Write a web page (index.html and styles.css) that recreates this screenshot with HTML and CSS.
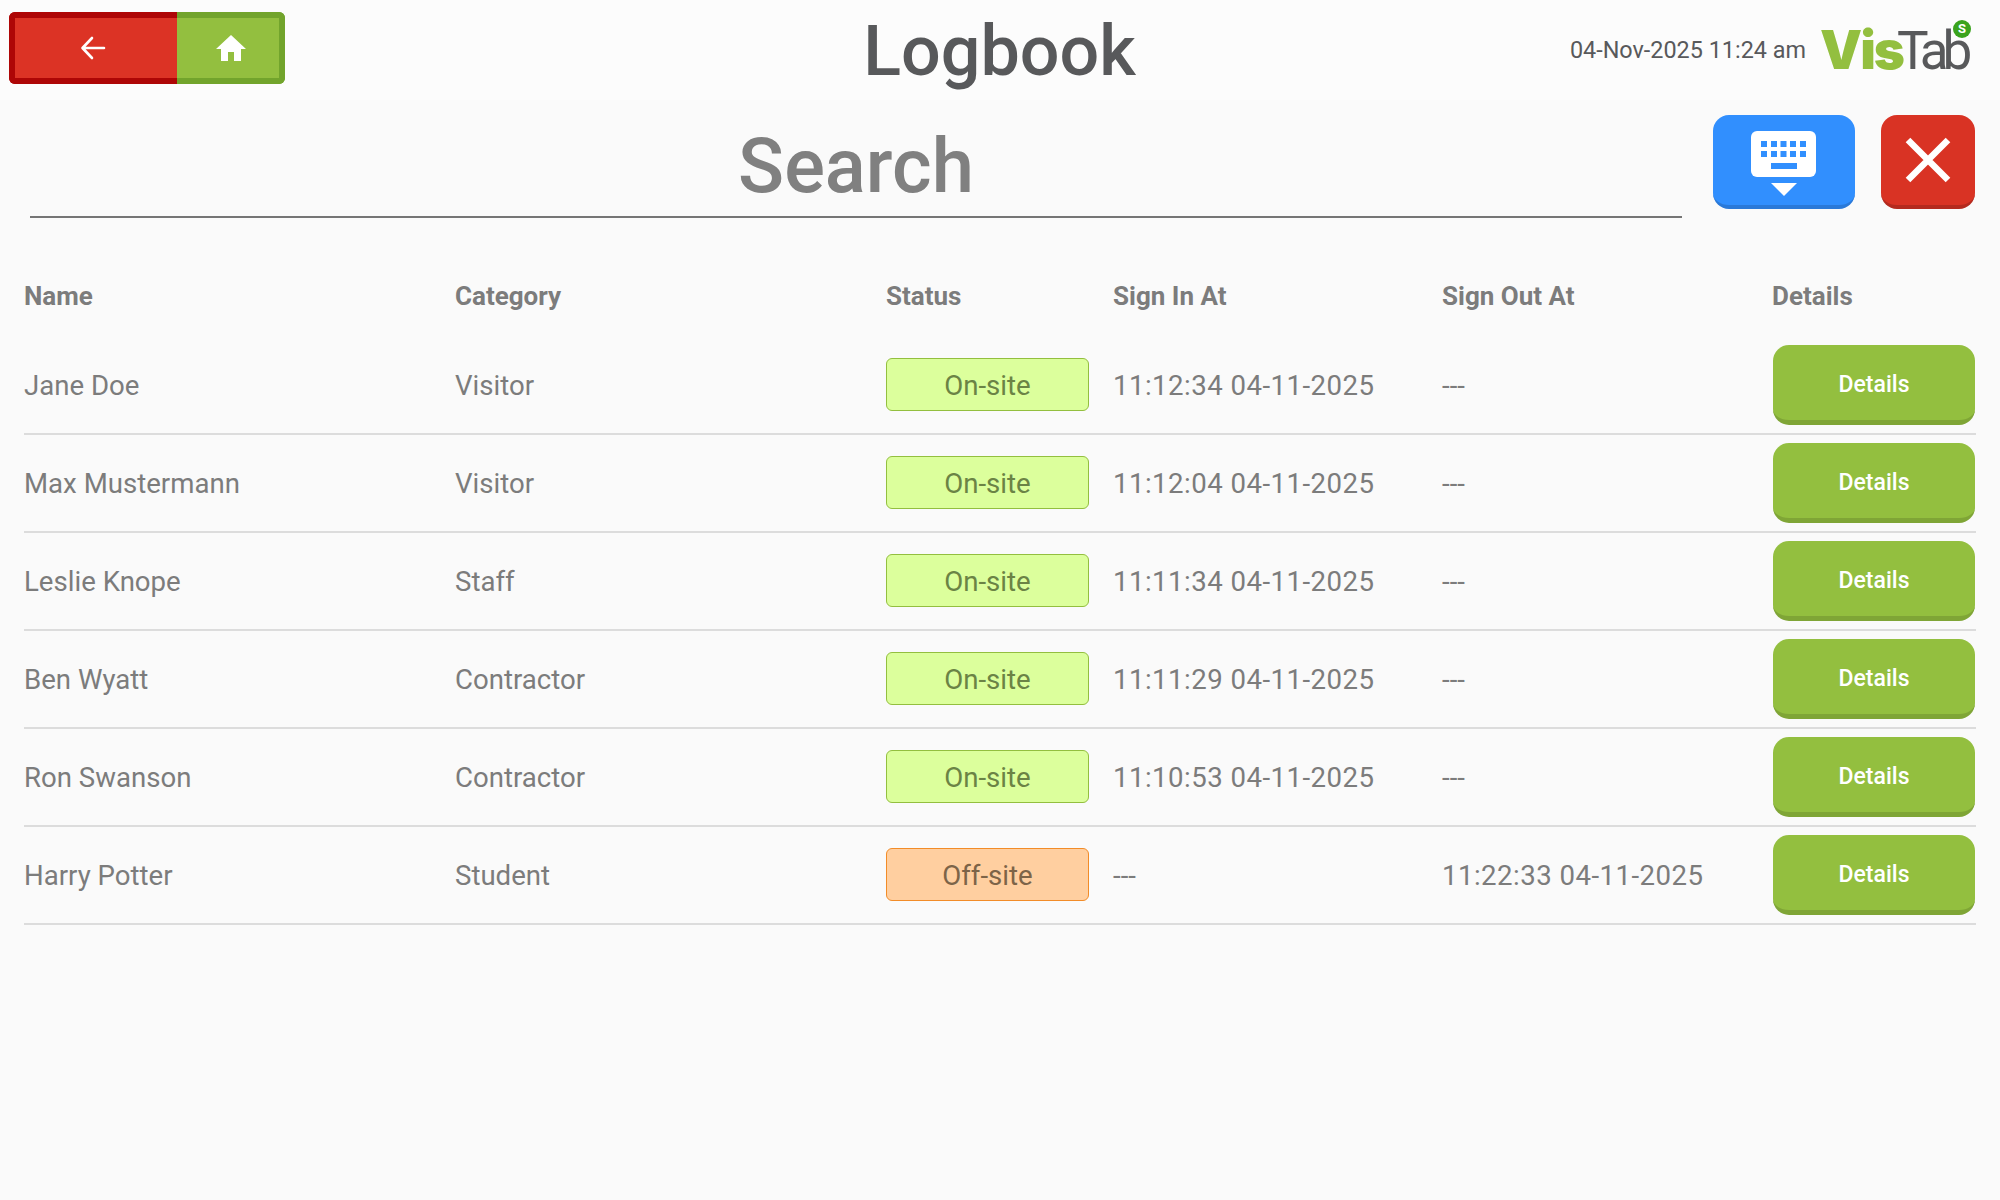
FILE: index.html
```html
<html>
<head>
    <title>Logbook</title>
    <link rel="stylesheet" href="styles.css">
</head>
<body>
    <header class="topbar">
        <div class="navbuttons">
            <div class="navbutton back">
                <svg width="26" height="24" viewBox="0 0 26 24"><path d="M24 12H3M12 2L2.500 12L12 22" fill="none" stroke="#fff" stroke-width="2.600" stroke-linecap="round" stroke-linejoin="round"/></svg>
            </div>
            <div class="navbutton home">
                <svg width="30" height="26" viewBox="0 0 30 26"><path d="M15 0L30 14H25V26H18V17H12V26H5V14H0Z" fill="#fff"/></svg>
            </div>
        </div>
        <h1 class="title">Logbook</h1>
        <div class="topright">
            <span class="clock">04-Nov-2025 11:24 am</span>
            <div class="logo"><span class="logo-vis">Vis</span><span class="logo-tab">Tab</span><span class="logo-badge">S</span></div>
        </div>
    </header>

    <section class="searchbar">
        <div class="searchfield">Search</div>
        <div class="iconbutton keyboard">
            <svg width="66" height="66" viewBox="0 0 66 66">
                <rect x="0" y="0" width="65" height="46" rx="6" fill="#fff"/>
                <g fill="#318ffe">
                    <rect x="10" y="10" width="6" height="6"/><rect x="20" y="10" width="6" height="6"/><rect x="29.500" y="10" width="6" height="6"/><rect x="39" y="10" width="6" height="6"/><rect x="49" y="10" width="6" height="6"/>
                    <rect x="10" y="20" width="6" height="6"/><rect x="20" y="20" width="6" height="6"/><rect x="29.500" y="20" width="6" height="6"/><rect x="39" y="20" width="6" height="6"/><rect x="49" y="20" width="6" height="6"/>
                    <rect x="20" y="32" width="26" height="6"/>
                </g>
                <path d="M20 52H46L33 65Z" fill="#fff"/>
            </svg>
        </div>
        <div class="iconbutton close">
            <svg width="46" height="46" viewBox="0 0 46 46"><path d="M3 3L43 43M43 3L3 43" stroke="#fff" stroke-width="6.500" fill="none"/></svg>
        </div>
    </section>

    <section class="logtable">
        <div class="logrow headrow">
            <div>Name</div><div>Category</div><div>Status</div><div>Sign In At</div><div>Sign Out At</div><div>Details</div>
        </div>
        <div class="logrow">
            <div>Jane Doe</div><div>Visitor</div><div><span class="pill onsite">On-site</span></div><div class="stamp">11:12:34 04-11-2025</div><div>---</div><div><span class="detailsbutton">Details</span></div>
        </div>
        <div class="logrow">
            <div>Max Mustermann</div><div>Visitor</div><div><span class="pill onsite">On-site</span></div><div class="stamp">11:12:04 04-11-2025</div><div>---</div><div><span class="detailsbutton">Details</span></div>
        </div>
        <div class="logrow">
            <div>Leslie Knope</div><div>Staff</div><div><span class="pill onsite">On-site</span></div><div class="stamp">11:11:34 04-11-2025</div><div>---</div><div><span class="detailsbutton">Details</span></div>
        </div>
        <div class="logrow">
            <div>Ben Wyatt</div><div>Contractor</div><div><span class="pill onsite">On-site</span></div><div class="stamp">11:11:29 04-11-2025</div><div>---</div><div><span class="detailsbutton">Details</span></div>
        </div>
        <div class="logrow">
            <div>Ron Swanson</div><div>Contractor</div><div><span class="pill onsite">On-site</span></div><div class="stamp">11:10:53 04-11-2025</div><div>---</div><div><span class="detailsbutton">Details</span></div>
        </div>
        <div class="logrow">
            <div>Harry Potter</div><div>Student</div><div><span class="pill offsite">Off-site</span></div><div>---</div><div class="stamp">11:22:33 04-11-2025</div><div><span class="detailsbutton">Details</span></div>
        </div>
    </section>
</body>
</html>
```

FILE: styles.css
```css
* {
    box-sizing: border-box;
}
html, body {
    height: 100%;
}
body {
    margin: 0;
    background-color: #fafafa;
    font-family: Roboto, "Liberation Sans", sans-serif;
    color: #7c7c7c;
    -webkit-font-smoothing: antialiased;
}
.topbar {
    display: grid;
    grid-template-columns: 1fr auto 1fr;
    align-items: center;
    height: 100px;
    padding: 0 29px 0 9px;
    background-color: #fcfcfc;
}
.navbuttons {
    display: flex;
    width: 276px;
    height: 72px;
    margin-top: -4px;
}
.navbutton {
    display: flex;
    align-items: center;
    justify-content: center;
    border-style: solid;
    border-width: 6px;
}
.back {
    width: 168px;
    padding-right: 6px;
    background-color: #dc3325;
    border-color: #ae0606;
    border-right-width: 0;
    border-radius: 6px 0 0 6px;
}
.home {
    width: 108px;
    padding-left: 6px;
    background-color: #93bf3f;
    border-color: #72a42c;
    border-left-width: 0;
    border-radius: 0 6px 6px 0;
}
.title {
    margin: 2px 0 0 19px;
    font-size: 70px;
    font-weight: 500;
    color: #58595b;
}
.topright {
    display: flex;
    align-items: center;
    justify-content: flex-end;
    gap: 14px;
}
.clock {
    font-size: 23.400px;
    color: #58595b;
}
.logo {
    position: relative;
    display: flex;
    align-items: baseline;
    width: 151px;
    line-height: 60px;
}
.logo-vis {
    font-family: Inter, sans-serif;
    font-size: 53px;
    font-weight: 900;
    color: #93bf3f;
    letter-spacing: -2px;
}
.logo-tab {
    margin-left: -6px;
    font-size: 53px;
    font-weight: 400;
    color: #58595b;
    letter-spacing: -6px;
}
.logo-badge {
    position: absolute;
    top: 0;
    right: 0;
    width: 18px;
    height: 18px;
    border-radius: 50%;
    background-color: #3aa31d;
    color: #fff;
    font-size: 13px;
    font-weight: 700;
    line-height: 18px;
    text-align: center;
}
.searchbar {
    display: flex;
    align-items: flex-start;
    height: 146px;
    padding: 15px 25px 0 30px;
}
.searchfield {
    width: 1652px;
    height: 103px;
    border-bottom: 2px solid #757575;
    font-size: 76px;
    font-weight: 500;
    line-height: 103px;
    text-align: center;
    color: #808080;
}
.iconbutton {
    display: flex;
    align-items: center;
    justify-content: center;
    height: 94px;
    border-radius: 16px;
}
.keyboard {
    width: 142px;
    margin-left: 31px;
    padding-top: 8px;
    background-color: #318ffe;
    border-bottom: 4px solid #2a79d8;
}
.close {
    width: 94px;
    margin-left: 26px;
    background-color: #d93324;
    border-bottom: 4px solid #b42a1e;
}
.logtable {
    padding: 0 24px 0 24px;
}
.logrow {
    display: grid;
    grid-template-columns: 431px 431px 227px 329px 330px 204px;
    align-items: center;
    height: 98px;
    border-bottom: 2px solid #dcdcdc;
    font-size: 27.600px;
}
.stamp {
    letter-spacing: 0.470px;
}
.headrow {
    height: 91px;
    border-bottom: 0;
    padding-top: 9px;
    font-size: 26px;
    font-weight: 700;
}
.pill {
    display: block;
    width: 203px;
    height: 53px;
    margin-top: -2px;
    border: 1px solid;
    border-radius: 6px;
    line-height: 53px;
    text-align: center;
}
.onsite {
    background-color: #dcff9c;
    border-color: #93bf3f;
    color: #6b8345;
}
.offsite {
    background-color: #ffcfa0;
    border-color: #f28c28;
    color: #7d6448;
}
.detailsbutton {
    display: block;
    width: 202px;
    height: 80px;
    margin-left: 1px;
    border-radius: 16px;
    border-bottom: 5px solid #7fa536;
    background-color: #93bf3f;
    color: #fff;
    font-size: 23px;
    font-weight: 500;
    line-height: 80px;
    text-align: center;
}
```
